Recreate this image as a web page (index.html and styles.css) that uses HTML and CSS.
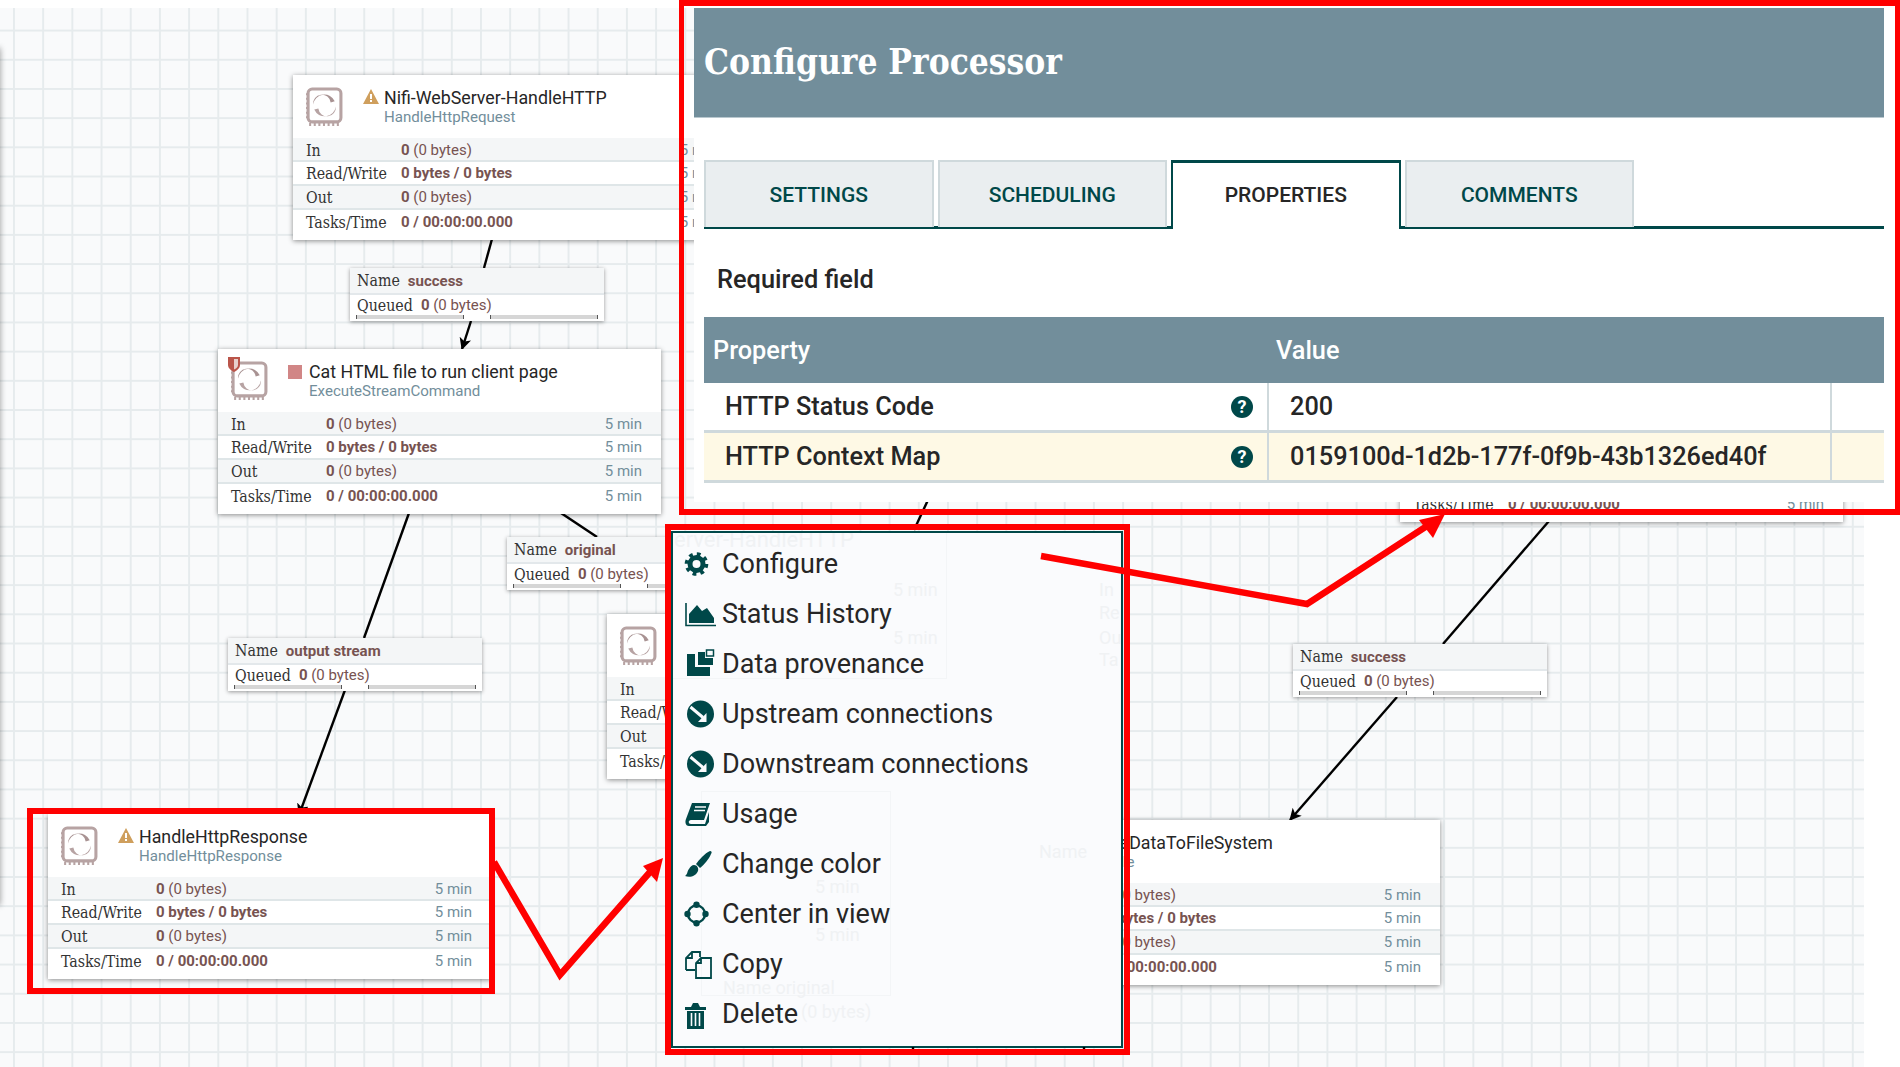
FILE: index.html
```html
<!DOCTYPE html>
<html lang="en">
<head>
<meta charset="utf-8">
<title>Configure Processor</title>
<link rel="stylesheet" href="styles.css">
</head>
<body>
<main class="canvas">
  <div class="offscreen-node"></div>
  <svg class="wires" width="1900" height="1067" viewBox="0 0 1900 1067">
    <defs>
      <marker id="tip" viewBox="0 0 12 12" refX="11" refY="6" markerWidth="12" markerHeight="12" markerUnits="userSpaceOnUse" orient="auto"><path d="M0 0L12 6L0 12L3 6Z" fill="#000"/></marker>
    </defs>
    <path class="wire" d="M492 239L484 268"/>
    <path class="wire" d="M471 321L462 349" marker-end="url(#tip)"/>
    <path class="wire" d="M409 513L364 638"/>
    <path class="wire" d="M561 513L597 537"/>
    <path class="wire" d="M345 690L299 815" marker-end="url(#tip)"/>
    <path class="wire" d="M928 500L914 530"/>
    <path class="wire" d="M1549 521L1443 644"/>
    <path class="wire" d="M1397 697L1290 820" marker-end="url(#tip)"/>
  </svg>

  <article class="node n1">
    <header class="node-head">
      <svg class="proc" viewBox="0 0 36 38"><use href="#proc-glyph"/></svg>
      <svg class="warn" viewBox="0 0 16 15"><path d="M8 0L16 15H0Z" fill="#cf9f5d"/><path d="M7 5h2v5H7zM7 11h2v2H7z" fill="#fff"/></svg>
      <div class="titles"><div class="name">Nifi-WebServer-HandleHTTP</div><div class="type">HandleHttpRequest</div></div>
    </header>
    <div class="row"><span class="key">In</span><span class="val"><b>0</b> (0 bytes)</span><span class="age">5 min</span></div>
    <div class="row"><span class="key">Read/Write</span><span class="val"><b>0 bytes / 0 bytes</b></span><span class="age">5 min</span></div>
    <div class="row"><span class="key">Out</span><span class="val"><b>0</b> (0 bytes)</span><span class="age">5 min</span></div>
    <div class="row"><span class="key">Tasks/Time</span><span class="val"><b>0 / 00:00:00.000</b></span><span class="age">5 min</span></div>
  </article>

  <article class="node n2">
    <header class="node-head">
      <svg class="proc" viewBox="0 0 36 38"><use href="#proc-glyph"/></svg>
      <svg class="shield" viewBox="0 0 12 15"><path d="M0 0H12V8C12 11 9 13.500 6 15C3 13.500 0 11 0 8Z" fill="#ba554a"/><path d="M6 2H10V8C10 10 8 11.500 6 12.500Z" fill="#e8d0cc"/></svg>
      <span class="stop"></span>
      <div class="titles"><div class="name">Cat HTML file to run client page</div><div class="type">ExecuteStreamCommand</div></div>
    </header>
    <div class="row"><span class="key">In</span><span class="val"><b>0</b> (0 bytes)</span><span class="age">5 min</span></div>
    <div class="row"><span class="key">Read/Write</span><span class="val"><b>0 bytes / 0 bytes</b></span><span class="age">5 min</span></div>
    <div class="row"><span class="key">Out</span><span class="val"><b>0</b> (0 bytes)</span><span class="age">5 min</span></div>
    <div class="row"><span class="key">Tasks/Time</span><span class="val"><b>0 / 00:00:00.000</b></span><span class="age">5 min</span></div>
  </article>

  <article class="node n3">
    <header class="node-head"></header>
    <div class="row"></div>
    <div class="row"></div>
    <div class="row"></div>
    <div class="row"><span class="key">Tasks/Time</span><span class="val"><b>0 / 00:00:00.000</b></span><span class="age">5 min</span></div>
  </article>

  <article class="node n4">
    <header class="node-head">
      <svg class="proc" viewBox="0 0 36 38"><use href="#proc-glyph"/></svg>
      <div class="titles"><div class="name">WriteDataToFileSystem</div><div class="type">PutFile</div></div>
    </header>
    <div class="row"><span class="key">In</span><span class="val"><b>0</b> (0 bytes)</span><span class="age">5 min</span></div>
    <div class="row"><span class="key">Read/Write</span><span class="val"><b>0 bytes / 0 bytes</b></span><span class="age">5 min</span></div>
    <div class="row"><span class="key">Out</span><span class="val"><b>0</b> (0 bytes)</span><span class="age">5 min</span></div>
    <div class="row"><span class="key">Tasks/Time</span><span class="val"><b>0 / 00:00:00.000</b></span><span class="age">5 min</span></div>
  </article>

  <article class="node n5">
    <header class="node-head">
      <svg class="proc" viewBox="0 0 36 38"><use href="#proc-glyph"/></svg>
    </header>
    <div class="row"><span class="key">In</span></div>
    <div class="row"><span class="key">Read/Write</span></div>
    <div class="row"><span class="key">Out</span></div>
    <div class="row"><span class="key">Tasks/Time</span></div>
  </article>

  <article class="node n6">
    <header class="node-head">
      <svg class="proc" viewBox="0 0 36 38"><use href="#proc-glyph"/></svg>
      <svg class="warn" viewBox="0 0 16 15"><path d="M8 0L16 15H0Z" fill="#cf9f5d"/><path d="M7 5h2v5H7zM7 11h2v2H7z" fill="#fff"/></svg>
      <div class="titles"><div class="name">HandleHttpResponse</div><div class="type">HandleHttpResponse</div></div>
    </header>
    <div class="row"><span class="key">In</span><span class="val"><b>0</b> (0 bytes)</span><span class="age">5 min</span></div>
    <div class="row"><span class="key">Read/Write</span><span class="val"><b>0 bytes / 0 bytes</b></span><span class="age">5 min</span></div>
    <div class="row"><span class="key">Out</span><span class="val"><b>0</b> (0 bytes)</span><span class="age">5 min</span></div>
    <div class="row"><span class="key">Tasks/Time</span><span class="val"><b>0 / 00:00:00.000</b></span><span class="age">5 min</span></div>
  </article>

  <section class="label l1">
    <div class="label-name"><span class="key">Name</span><b>success</b></div>
    <div class="label-queue"><span class="key">Queued</span><span class="val"><b>0</b> (0 bytes)</span></div>
    <div class="bars"><i></i><i></i></div>
  </section>
  <section class="label l2">
    <div class="label-name"><span class="key">Name</span><b>original</b></div>
    <div class="label-queue"><span class="key">Queued</span><span class="val"><b>0</b> (0 bytes)</span></div>
    <div class="bars"><i></i><i></i></div>
  </section>
  <section class="label l3">
    <div class="label-name"><span class="key">Name</span><b>output stream</b></div>
    <div class="label-queue"><span class="key">Queued</span><span class="val"><b>0</b> (0 bytes)</span></div>
    <div class="bars"><i></i><i></i></div>
  </section>
  <section class="label l4">
    <div class="label-name"><span class="key">Name</span><b>success</b></div>
    <div class="label-queue"><span class="key">Queued</span><span class="val"><b>0</b> (0 bytes)</span></div>
    <div class="bars"><i></i><i></i></div>
  </section>

  <section class="dialog">
    <h1 class="dialog-title">Configure Processor</h1>
    <nav class="tabs">
      <span class="tab">SETTINGS</span>
      <span class="tab">SCHEDULING</span>
      <span class="tab tab-on">PROPERTIES</span>
      <span class="tab">COMMENTS</span>
    </nav>
    <p class="required">Required field</p>
    <div class="props">
      <div class="props-head"><span class="ph-name">Property</span><span>Value</span></div>
      <div class="prop"><span class="prop-name"><span>HTTP Status Code</span><span class="help">?</span></span><span class="prop-val">200</span><span class="prop-end"></span></div>
      <div class="prop prop-sel"><span class="prop-name"><span>HTTP Context Map</span><span class="help">?</span></span><span class="prop-val">0159100d-1d2b-177f-0f9b-43b1326ed40f</span><span class="prop-end"></span></div>
    </div>
  </section>

  <nav class="menu">
    <div class="ghosts">
      <span class="ghost-box gb1"></span>
      <span class="ghost-box gb2"></span>
      <span class="ghost g1">erver-HandleHTTP</span>
      <span class="ghost g2">5 min</span>
      <span class="ghost g3">5 min</span>
      <span class="ghost g4">In</span>
      <span class="ghost g5">Re</span>
      <span class="ghost g6">Ou</span>
      <span class="ghost g7">Ta</span>
      <span class="ghost g8">5 min</span>
      <span class="ghost g9">5 min</span>
      <span class="ghost g10">Name original</span>
      <span class="ghost g11">(0 bytes)</span>
      <span class="ghost g12">Name</span>
    </div>
    <div class="menu-item">
      <svg class="mi" viewBox="0 0 32 24"><circle cx="11.500" cy="12" r="6.500" fill="none" stroke="#004849" stroke-width="5"/><circle cx="11.500" cy="12" r="9.800" fill="none" stroke="#004849" stroke-width="4" stroke-dasharray="3.700 4"/></svg>
      <span>Configure</span></div>
    <div class="menu-item">
      <svg class="mi" viewBox="0 0 32 24"><path d="M1 1V23.500H31" fill="none" stroke="#004849" stroke-width="1.600"/><path d="M4 21V12L12 3L17 9L22 6L29 16V21Z" fill="#004849"/></svg>
      <span>Status History</span></div>
    <div class="menu-item">
      <svg class="mi" viewBox="0 0 32 24"><path d="M2 2H10V15H25V24H2Z" fill="#004849"/><path d="M13 0H20V6H28V13H13Z" fill="#004849"/><rect x="21.500" y="-2" width="7" height="6" fill="#fafbfd" stroke="#004849" stroke-width="1.500"/></svg>
      <span>Data provenance</span></div>
    <div class="menu-item">
      <svg class="mi" viewBox="0 0 32 24"><circle cx="15.500" cy="12" r="13.500" fill="#004849"/><path d="M5.500 5L18 15.500" stroke="#fafbfd" stroke-width="3"/><path d="M21.500 20V11L13 20Z" fill="#fafbfd"/></svg>
      <span>Upstream connections</span></div>
    <div class="menu-item">
      <svg class="mi" viewBox="0 0 32 24"><circle cx="15.500" cy="12" r="13.500" fill="#004849"/><path d="M5.500 5L18 15.500" stroke="#fafbfd" stroke-width="3"/><path d="M21.500 20V11L13 20Z" fill="#fafbfd"/></svg>
      <span>Downstream connections</span></div>
    <div class="menu-item">
      <svg class="mi" viewBox="0 0 32 24"><path d="M7 1H25L19 18H6C3 18 3 22 6 22H20L24 10V20L21 24H4C0 24 0 19 1 17Z" fill="#004849"/><path d="M10 5H21M9 8.500H20" stroke="#fafbfd" stroke-width="1.500"/></svg>
      <span>Usage</span></div>
    <div class="menu-item">
      <svg class="mi" viewBox="0 0 32 24"><path d="M25 -1C27 -1 27 1 26 2C24 7 19 13 15 16L11 12C14 8 20 1 25 -1Z" fill="#004849"/><path d="M9 13C12 13 14 16 13 19C11 24 5 26 0 24C3 22 2 19 4 17C5 15 7 13 9 13Z" fill="#004849"/></svg>
      <span>Change color</span></div>
    <div class="menu-item">
      <svg class="mi" viewBox="0 0 32 24"><circle cx="11.500" cy="12" r="8.500" fill="none" stroke="#004849" stroke-width="2.400"/><circle cx="11.500" cy="2.800" r="3.200" fill="#004849"/><circle cx="11.500" cy="21.200" r="3.200" fill="#004849"/><circle cx="2.500" cy="12" r="3.200" fill="#004849"/><circle cx="20.500" cy="12" r="3.200" fill="#004849"/></svg>
      <span>Center in view</span></div>
    <div class="menu-item">
      <svg class="mi" viewBox="0 0 32 24"><path d="M1 18V6L7 0H15V5M1 6H7V0M1 18H10" fill="none" stroke="#004849" stroke-width="1.800"/><path d="M16 6H26V26H11V11ZM11 11H16V6" fill="none" stroke="#004849" stroke-width="1.800"/></svg>
      <span>Copy</span></div>
    <div class="menu-item">
      <svg class="mi" viewBox="0 0 32 24"><path d="M0 5H6L8 1H13L15 5H21V8H0Z" fill="#004849"/><path d="M2 9H19V27H2Z" fill="#004849"/><path d="M6.500 11V24M10.500 11V24M14.500 11V24" stroke="#fafbfd" stroke-width="1.600"/></svg>
      <span>Delete</span></div>
  </nav>
  <svg class="pokes" width="1900" height="1067" viewBox="0 0 1900 1067"><path class="wire" d="M913 1047V1051M1084 1047V1051"/></svg>

  <div class="mark mark-dialog"></div>
  <div class="mark mark-menu"></div>
  <div class="mark mark-node"></div>
  <svg class="arrows" width="1900" height="1067" viewBox="0 0 1900 1067">
    <path class="arrow" d="M494 862L560 975L650 872"/>
    <path d="M663 858L643 866L657 882Z" fill="#f00"/>
    <path class="arrow" d="M1041 556L1307 604L1430 524"/>
    <path d="M1445 514L1419 520L1433 538Z" fill="#f00"/>
  </svg>

  <svg class="sprite" width="0" height="0">
    <symbol id="proc-glyph" viewBox="0 0 36 38">
      <rect x="2" y="2" width="32" height="32" rx="4" fill="none" stroke="#b7a3a3" stroke-width="3"/>
      <path d="M1 6V33M3 36.500H33" fill="none" stroke="#b7a3a3" stroke-width="3" stroke-dasharray="2 2.500"/>
      <path d="M7 17A11 11 0 0 1 28 14L24 15A8 8 0 0 0 7 17Z" fill="#a89292"/>
      <path d="M29 19A11 11 0 0 1 8 22L12 21A8 8 0 0 0 29 19Z" fill="#b7a3a3"/>
    </symbol>
  </svg>
</main>
</body>
</html>
```
FILE: styles.css
```css
* { box-sizing: border-box; }
html, body { margin: 0; height: 100%; background: #fff; overflow: hidden; }
body { font-family: Roboto, "Liberation Sans", sans-serif; color: #262626; }

.canvas {
  position: relative;
  width: 1900px;
  height: 1067px;
  overflow: hidden;
  background-color: #fff;
}
.canvas::before {
  content: "";
  position: absolute;
  left: 0; top: 8px; bottom: 0; width: 1864px;
  background-color: #f9fafb;
  background-image:
    linear-gradient(#e6ebed 2px, transparent 2px),
    linear-gradient(90deg, #e6ebed 2px, transparent 2px);
  background-size: 29.2px 29.2px;
  background-position: 13px -7.600px;
}
.offscreen-node {
  position: absolute; left: -20px; top: 48px; width: 20px; height: 857px;
  box-shadow: 0 0 6px rgba(0,0,0,.4);
}

.wires, .arrows, .sprite, .pokes { position: absolute; left: 0; top: 0; }
.wire { fill: none; stroke: #000; stroke-width: 2.400; }
.arrows { z-index: 6; pointer-events: none; }
.pokes { z-index: 4; pointer-events: none; }
.arrow { fill: none; stroke: #f00; stroke-width: 6.500; }

/* processor nodes */
.node {
  position: absolute;
  width: 443px;
  background: #fff;
  box-shadow: 0 1px 5px rgba(0,0,0,.45);
}
.n1 { left: 293px; top: 75px; }
.n2 { left: 218px; top: 349px; }
.n3 { left: 1400px; top: 357px; }
.n4 { left: 997px; top: 820px; }
.n5 { left: 607px; top: 614px; }
.n6 { left: 48px; top: 814px; }

.node-head { position: relative; height: 63px; }
.proc { position: absolute; left: 13px; top: 12px; width: 37px; height: 39px; }
.warn { position: absolute; left: 70px; top: 14px; width: 16px; height: 15px; }
.stop { position: absolute; left: 70px; top: 16px; width: 14px; height: 14px; background: #d18686; }
.shield { position: absolute; left: 10px; top: 8px; width: 12px; height: 15px; }
.titles { position: absolute; left: 91px; top: 12px; white-space: nowrap; }
.name { font-size: 17.800px; line-height: 22px; color: #262626; }
.type { font-size: 15.100px; line-height: 17px; color: #728e9b; }

.row {
  display: flex;
  align-items: center;
  height: 24px;
  padding: 0 19px 0 13px;
  font-size: 15px;
  border-bottom: 2px solid #dfe6e8;
  white-space: nowrap;
  background: #fff;
}
.node-head + .row { padding-top: 2px; }
.row:nth-child(even) { background: #f4f6f7; }
.row:last-child { height: 30px; padding-bottom: 6px; border-bottom: 0; }
.key { font-family: "DejaVu Serif Condensed", "DejaVu Serif", serif; font-size: 15.800px; color: #333; }
.row .key { width: 95px; flex: none; }
.val { color: #775351; flex: 1; }
.val b, .label b { font-weight: 700; color: #775351; }
.age { color: #728e9b; }

/* connection labels */
.label {
  position: absolute;
  width: 254px;
  height: 53px;
  background: #fff;
  box-shadow: 0 1px 4px rgba(0,0,0,.4);
  font-size: 15px;
  white-space: nowrap;
}
.l1 { left: 350px; top: 268px; }
.l2 { left: 507px; top: 537px; }
.l3 { left: 228px; top: 638px; }
.l4 { left: 1293px; top: 644px; }
.label-name {
  display: flex; align-items: center; gap: 8px;
  height: 27px; padding: 0 7px;
  background: #f4f6f7; border-bottom: 2px solid #e3e8eb;
}
.label-queue { display: flex; align-items: center; gap: 8px; height: 18px; padding: 2px 7px 0; }
.bars { display: flex; justify-content: space-between; padding: 2px 6px 0; }
.bars i {
  display: block; width: 108px; height: 4px;
  background: #d6d6d6;
  border-left: 1px solid #555; border-right: 1px solid #555;
}

/* dialog */
.dialog {
  position: absolute; z-index: 3;
  left: 694px; top: 6px; width: 1201px; height: 496px;
  padding: 2px 11px 0 0;
  background: #fff;
}
.dialog-title {
  margin: 0; height: 110px;
  padding: 36px 0 0 10px;
  background: #728e9b;
  font: 700 35px/36px "DejaVu Serif Condensed", "DejaVu Serif", serif;
  color: #fff;
  border-bottom: 1px solid #b9c8cf;
}
.tabs {
  display: flex; gap: 4px;
  height: 69px; margin: 42px 0 0 10px;
  border-bottom: 3px solid #004849;
}
.tab {
  display: flex; align-items: center; justify-content: center;
  width: 229.500px; height: 67px;
  background: #eaeef0;
  border: 2px solid #cfd9dc; border-bottom: 0;
  font-size: 21px; font-weight: 500; color: #004849;
}
.tab-on {
  height: 69px;
  padding-bottom: 2px;
  background: #fff; color: #262626;
  border: 2px solid #004849; border-top-width: 3px; border-bottom: 0;
}
.required { margin: 0; padding: 34px 0 0 23px; font-size: 25.400px; line-height: 32px; font-weight: 500; color: #262626; }
.props { margin: 22px 0 0 10px; }
.props-head {
  display: flex; align-items: center;
  height: 66px; padding-left: 9px;
  background: #728e9b; color: #fff;
  font-size: 25.300px; font-weight: 500;
}
.ph-name { width: 563px; }
.prop {
  display: flex; height: 50px;
  background: #fff;
  border-bottom: 3px solid #cfd9dc;
  font-size: 25.300px; font-weight: 500;
}
.prop-sel { background: #fef9e5; }
.prop-name {
  display: flex; align-items: center; justify-content: space-between;
  width: 565px; padding: 0 14px 0 21px;
  border-right: 2px solid #cfd9dc;
}
.prop-val { display: flex; align-items: center; width: 563px; padding-left: 21px; border-right: 2px solid #cfd9dc; }
.prop-end { flex: 1; }
.help {
  display: flex; align-items: center; justify-content: center;
  width: 22px; height: 22px; border-radius: 50%;
  background: #004849; color: #fff;
  font-size: 18px; font-weight: 700;
}

/* context menu */
.menu {
  position: absolute; z-index: 4;
  left: 671px; top: 531px; width: 452px; height: 517px;
  padding-top: 6px;
  background: #fafbfd;
  border: 2px solid #004849;
  display: flex; flex-direction: column;
  overflow: hidden;
}
.menu-item {
  position: relative;
  display: flex; align-items: center; gap: 5px;
  flex: none;
  height: 50px; padding-left: 12px;
  font-size: 27px; color: #262626;
}
.mi { width: 32px; height: 24px; flex: none; overflow: visible; }

/* faint image of the canvas that shows through the menu */
.ghosts { position: absolute; left: -2px; top: -2px; width: 452px; height: 517px; }
.ghost { position: absolute; font-size: 18px; line-height: 14px; color: #f0f2f4; white-space: nowrap; }
.ghost-box { position: absolute; border: 1px solid #f3f5f7; }
.gb1 { left: -10px; top: -10px; width: 286px; height: 158px; }
.gb2 { left: 30px; top: 260px; width: 190px; height: 205px; }
.g1 { left: 3px; top: 2px; font-size: 22px; line-height: 14px; }
.g2 { left: 222px; top: 52px; }
.g3 { left: 222px; top: 100px; }
.g4 { left: 428px; top: 52px; }
.g5 { left: 428px; top: 75px; }
.g6 { left: 428px; top: 100px; }
.g7 { left: 428px; top: 122px; }
.g8 { left: 144px; top: 349px; }
.g9 { left: 144px; top: 397px; }
.g10 { left: 52px; top: 450px; }
.g11 { left: 130px; top: 474px; }
.g12 { left: 368px; top: 314px; }

/* red annotation frames */
.mark { position: absolute; z-index: 5; border: 6px solid #f00; }
.mark-dialog { left: 679px; top: 0; width: 1221px; height: 515px; border-right-width: 5px; border-left-width: 5px; }
.mark-menu { left: 665px; top: 524px; width: 465px; height: 531px; }
.mark-node { left: 27px; top: 808px; width: 468px; height: 186px; }
```
